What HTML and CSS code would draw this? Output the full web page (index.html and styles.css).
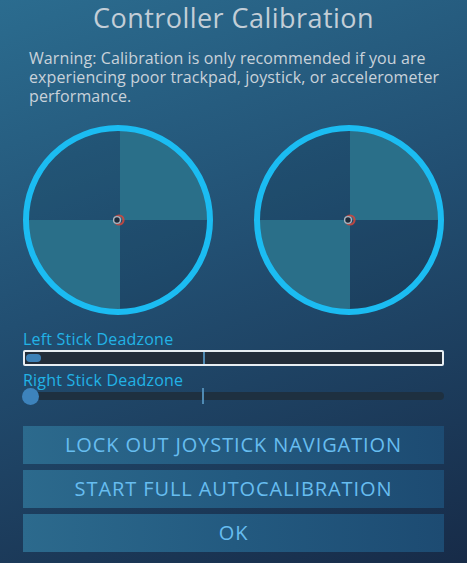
FILE: index.html
```html
<!DOCTYPE html>
<html>
<head>
<meta charset="utf-8">
<link rel="stylesheet" href="styles.css">
</head>
<body>
<div class="page">
  <h1 class="title">Controller Calibration</h1>
  <p class="warning">Warning: Calibration is only recommended if you are experiencing poor trackpad, joystick, or accelerometer performance.</p>
  <div class="sticks">
    <svg class="stick" width="190" height="190" viewBox="0 0 190 190">
      <path class="q-dark" d="M97,95 L97,3 A92,92 0 0 0 3,95 Z"/>
      <path class="q-dark" d="M97,95 L187,95 A92,92 0 0 1 97,187 Z"/>
      <path class="q-light" d="M97,95 L97,3 A92,92 0 0 1 187,95 Z"/>
      <path class="q-light" d="M97,95 L97,187 A92,92 0 0 1 3,95 Z"/>
      <circle class="ring" cx="95" cy="95" r="92"/>
      <circle class="dot-red" cx="96" cy="95" r="4.5"/>
      <circle class="dot" cx="94" cy="95" r="3.4"/>
    </svg>
    <svg class="stick" width="190" height="190" viewBox="0 0 190 190">
      <path class="q-dark" d="M96,95 L96,3 A92,92 0 0 0 3,95 Z"/>
      <path class="q-dark" d="M96,95 L187,95 A92,92 0 0 1 96,187 Z"/>
      <path class="q-light" d="M96,95 L96,3 A92,92 0 0 1 187,95 Z"/>
      <path class="q-light" d="M96,95 L96,187 A92,92 0 0 1 3,95 Z"/>
      <circle class="ring" cx="95" cy="95" r="92"/>
      <circle class="dot-red" cx="96" cy="95" r="4.5"/>
      <circle class="dot" cx="94" cy="95" r="3.4"/>
    </svg>
  </div>
  <div class="slider-group">
    <div class="slider-label">Left Stick Deadzone</div>
    <div class="slider slider-focused">
      <div class="knob-pill"></div>
      <div class="tick tick-inner"></div>
    </div>
    <div class="slider-label label-second">Right Stick Deadzone</div>
    <div class="slider slider-plain">
      <div class="track"></div>
      <div class="knob-round"></div>
      <div class="tick tick-outer"></div>
    </div>
  </div>
  <div class="buttons">
    <div class="btn">LOCK OUT JOYSTICK NAVIGATION</div>
    <div class="btn">START FULL AUTOCALIBRATION</div>
    <div class="btn">OK</div>
  </div>
</div>
</body>
</html>
```
FILE: styles.css
```css
html, body {
  margin: 0;
  padding: 0;
}
body {
  width: 467px;
  height: 563px;
  overflow: hidden;
  background: linear-gradient(160deg, #2b6c8f 0%, #224f72 45%, #172b48 100%);
  font-family: "Open Sans", "Noto Sans", sans-serif;
}
.page {
  box-sizing: border-box;
  width: 467px;
  height: 563px;
  padding: 0 23px;
  display: flex;
  flex-direction: column;
}
.title {
  margin: 0;
  font-size: 27px;
  line-height: 36px;
  letter-spacing: 0.45px;
  font-weight: 400;
  text-align: center;
  color: #c3ced7;
}
.warning {
  margin: 13px 0 0 0;
  padding-left: 6px;
  font-size: 16px;
  line-height: 19px;
  letter-spacing: 0.1px;
  color: #c9d2da;
}
.sticks {
  margin-top: 19px;
  display: flex;
  gap: 41px;
}
.stick {
  display: block;
}
.q-light {
  fill: #2a6f89;
}
.q-dark {
  fill: rgba(12, 30, 50, 0.12);
}
.ring {
  fill: none;
  stroke: #1bbcf2;
  stroke-width: 6;
}
.dot-red {
  fill: none;
  stroke: rgba(210, 70, 60, 0.85);
  stroke-width: 2.2;
}
.dot {
  fill: #1d2c3c;
  stroke: #a9b6c2;
  stroke-width: 1.4;
}
.slider-group {
  margin-top: 14px;
  display: flex;
  flex-direction: column;
}
.slider-label {
  font-size: 16px;
  line-height: 20px;
  letter-spacing: 0.2px;
  color: #22b3e6;
}
.label-second {
  margin-top: 5px;
  line-height: 18px;
}
.slider {
  position: relative;
  height: 16px;
}
.slider-focused {
  box-sizing: border-box;
  border: 2px solid #e8eef2;
  border-radius: 2px;
  background: #232e3a;
  margin-top: 1px;
}
.knob-pill {
  position: absolute;
  left: 1px;
  top: 2px;
  width: 15px;
  height: 8px;
  border-radius: 4px;
  background: #3d82b8;
}
.tick {
  position: absolute;
  width: 2px;
  background: #4f8ab3;
}
.tick-inner {
  left: 178px;
  top: 0;
  bottom: 0;
}
.track {
  position: absolute;
  left: 7px;
  right: 0;
  top: 3px;
  height: 8px;
  border-radius: 4px;
  background: #1e3040;
}
.knob-round {
  position: absolute;
  left: -1px;
  top: -1px;
  width: 17px;
  height: 17px;
  border-radius: 50%;
  background: #3d83bc;
}
.tick-outer {
  left: 179px;
  top: -1px;
  height: 16px;
}
.buttons {
  margin-top: 21px;
  display: flex;
  flex-direction: column;
  gap: 6px;
}
.btn {
  height: 38px;
  line-height: 38px;
  text-align: center;
  font-size: 20px;
  letter-spacing: 0.9px;
  color: #67bdf0;
  background: linear-gradient(90deg, #2c6a8d 0%, #235a80 50%, #1d4b72 100%);
}
```
